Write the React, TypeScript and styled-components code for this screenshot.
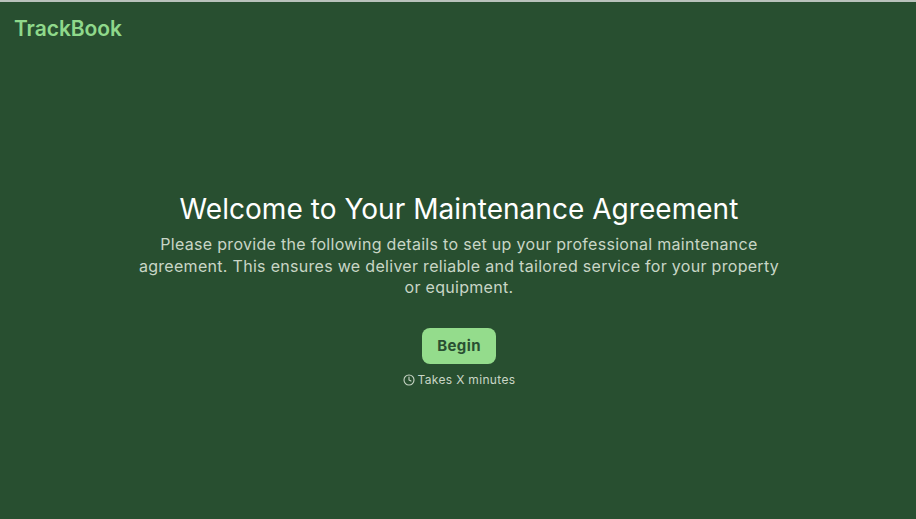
import React from 'react'
import styled, { createGlobalStyle } from 'styled-components'
import { Clock } from 'lucide-react'

const GlobalStyle = createGlobalStyle`
  html, body {
    margin: 0;
    padding: 0;
    height: 100%;
    background: #284f30;
  }
  #root {
    height: 100%;
  }
`

const App: React.FC = () => {
  return (
    <StyledPage>
      <GlobalStyle />
      <StyledHeader>
        <StyledLogo>TrackBook</StyledLogo>
      </StyledHeader>
      <StyledMain>
        <StyledTitle>Welcome to Your Maintenance Agreement</StyledTitle>
        <StyledText>
          Please provide the following details to set up your professional maintenance
          agreement. This ensures we deliver reliable and tailored service for your property
          or equipment.
        </StyledText>
        <StyledButton>Begin</StyledButton>
        <StyledNote>
          <Clock size={12} strokeWidth={2.2} />
          Takes X minutes
        </StyledNote>
      </StyledMain>
    </StyledPage>
  )
}

const StyledPage = styled.div`
  box-sizing: border-box;
  display: flex;
  flex-direction: column;
  height: 519px;
  border-top: 2px solid #b9c2bb;
  background: #284f30;
  font-family: 'Inter', 'Liberation Sans', sans-serif;
`

const StyledHeader = styled.header`
  display: flex;
  align-items: center;
  height: 52px;
  padding-left: 14px;
`

const StyledLogo = styled.div`
  color: #8fd98b;
  font-size: 21px;
  font-weight: 600;
  letter-spacing: -0.05px;
`

const StyledMain = styled.main`
  display: flex;
  flex-direction: column;
  align-items: center;
  padding: 137px 0 0 2px;
`

const StyledTitle = styled.h1`
  margin: 0;
  color: #ffffff;
  font-size: 28px;
  line-height: 36px;
  font-weight: 400;
  letter-spacing: 0.04px;
  text-align: center;
`

const StyledText = styled.p`
  width: 645px;
  margin: 7px 0 0;
  color: #c9d6c6;
  font-size: 16px;
  line-height: 21.5px;
  font-weight: 400;
  letter-spacing: 0.3px;
  text-align: center;
`

const StyledButton = styled.button`
  width: 74px;
  height: 36px;
  margin-top: 29px;
  padding: 0;
  border: none;
  border-radius: 8px;
  background: #94dc8c;
  color: #295032;
  font-family: inherit;
  font-size: 15px;
  font-weight: 700;
  letter-spacing: 0.4px;
`

const StyledNote = styled.div`
  display: flex;
  align-items: center;
  gap: 3px;
  margin-top: 8px;
  color: #c9d6c6;
  font-size: 12px;
  line-height: 16px;
  letter-spacing: 0.33px;
`

export default App
